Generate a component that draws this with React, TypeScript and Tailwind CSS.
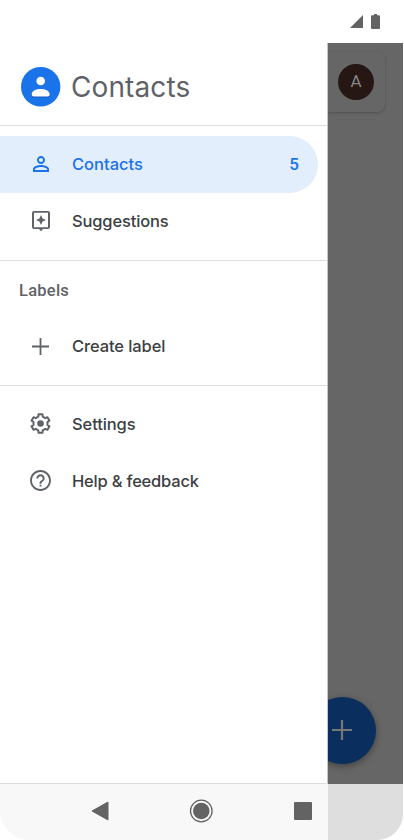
import type { ReactNode } from "react";

interface MenuItemProps {
  icon: ReactNode;
  label: string;
  labelClass?: string;
  count?: number;
  active?: boolean;
}

const PersonIcon = () => (
  <svg className="w-[24px] h-[24px] mt-[-1px]" viewBox="0 0 24 24" fill="currentColor">
    <path d="M12 5.900a2.100 2.100 0 1 1 0 4.200 2.100 2.100 0 0 1 0-4.200m0 9c2.970 0 6.100 1.460 6.100 2.100v1.100H5.900V17c0-.640 3.130-2.100 6.100-2.100M12 4C9.790 4 8 5.790 8 8s1.790 4 4 4 4-1.790 4-4-1.790-4-4-4m0 9c-2.670 0-8 1.340-8 4v3h16v-3c0-2.660-5.330-4-8-4" />
  </svg>
);

const SuggestionsIcon = () => (
  <svg className="w-[24px] h-[24px] mt-[-1px]" viewBox="0 0 24 24" fill="currentColor">
    <path d="M19 2H5a2 2 0 0 0-2 2v14a2 2 0 0 0 2 2h5l2 2.300 2-2.300h5a2 2 0 0 0 2-2V4a2 2 0 0 0-2-2m0 16.200H5V3.800h14z" />
    <path d="M12 16l1.600-3.400L17 11l-3.400-1.600L12 6l-1.600 3.400L7 11l3.400 1.600z" />
  </svg>
);

const PlusIcon = () => (
  <svg className="w-[17px] h-[17px]" viewBox="0 0 17 17" fill="none" stroke="currentColor" strokeWidth="1.800">
    <path d="M8.500 0v17M0 8.500h17" />
  </svg>
);

const GearIcon = () => (
  <svg className="w-[23px] h-[23px] mt-[-2px]" viewBox="-11.500 -11.500 23 23" fill="none" stroke="currentColor" strokeWidth="2" strokeLinejoin="round">
    <path d="M-2.200-6.800L-2-9.200H2L2.200-6.800L4.790-5.310L6.970-6.330L8.970-2.870L6.990-1.490V1.490L8.970 2.870L6.970 6.330L4.790 5.310L2.200 6.800L2 9.200H-2L-2.200 6.800L-4.790 5.310L-6.970 6.330L-8.970 2.870L-6.990 1.490V-1.490L-8.970-2.870L-6.970-6.330L-4.790-5.310z" />
    <circle r="3.300" fill="currentColor" stroke="none" />
  </svg>
);

const HelpIcon = () => (
  <svg className="w-[25px] h-[25px] mt-[-2px]" viewBox="0 0 24 24" fill="currentColor">
    <path d="M11.100 17.800h1.800V16h-1.800zM12 2C6.480 2 2 6.480 2 12s4.480 10 10 10 10-4.480 10-10S17.520 2 12 2m0 18.200c-4.520 0-8.200-3.680-8.200-8.200S7.480 3.800 12 3.800s8.200 3.680 8.200 8.200-3.680 8.200-8.200 8.200M12 6c-2.210 0-4 1.790-4 4h1.900c0-1.150.950-2.100 2.100-2.100s2.100.950 2.100 2.100c0 2-3.050 1.750-3.050 5h1.900c0-2.250 3.050-2.500 3.050-5 0-2.210-1.790-4-4-4" />
  </svg>
);

const MenuItem = ({ icon, label, labelClass = "", count, active = false }: MenuItemProps) => (
  <li
    className={`flex items-center h-[57.200px] mr-[9px] pr-[19px] rounded-r-full ${
      active ? "bg-[#e2eefb] text-[#1a73e8]" : "text-[#5f6368]"
    }`}
  >
    <span className="flex justify-center w-[81px] mr-[-9px]">{icon}</span>
    <span className={`flex-1 pb-[1px] text-[16.500px] font-[480] ${active ? "" : "text-[#3c4043]"} ${labelClass}`}>{label}</span>
    {count !== undefined && <span className="pt-[1px] font-[Roboto] text-[17px] font-medium">{count}</span>}
  </li>
);

const StatusBar = () => (
  <header className="flex justify-end h-[43px] pt-[14px] pr-[24px] gap-[8px] text-[#636363]">
    <svg className="w-[13px] h-[14px]" viewBox="0 0 13 14" fill="currentColor">
      <path d="M13 1v13H0z" />
    </svg>
    <svg className="w-[9px] h-[15px]" viewBox="0 0 9 15" fill="currentColor">
      <path d="M3 0h3v1.300h2a1 1 0 0 1 1 1V14a1 1 0 0 1-1 1H1a1 1 0 0 1-1-1V2.300a1 1 0 0 1 1-1h2z" />
    </svg>
  </header>
);

const Drawer = () => (
  <aside className="w-[328px] shrink-0 bg-white border-r border-[#c4c4c4]">
    <div className="flex items-center h-[83px] pl-[21px] pt-[5px] border-b border-[#dedede]">
      <svg className="w-[40px] h-[40px] mr-[10px]" viewBox="0 0 40 40">
        <circle cx="19.700" cy="19.700" r="19.700" fill="#1a73e8" />
        <path d="M10.700 28.500c0-4 4.500-5.700 9-5.700s9 1.700 9 5.700a1.900 1.900 0 0 1-1.900 1.900H12.600a1.900 1.900 0 0 1-1.900-1.900" fill="#125bbd" />
        <path d="M10.700 27.600c0-4 4.500-5.700 9-5.700s9 1.700 9 5.700a1.900 1.900 0 0 1-1.900 1.900H12.600a1.900 1.900 0 0 1-1.900-1.900" fill="#fff" />
        <circle cx="19.700" cy="14" r="4.300" fill="#fff" />
      </svg>
      <h1 className="text-[28px] leading-none font-[370] tracking-[0.100px] text-[#5f6368]">Contacts</h1>
    </div>
    <ul className="pt-[10px] h-[135px] border-b border-[#dedede]">
      <MenuItem icon={<PersonIcon />} label="Contacts" count={5} active />
      <MenuItem icon={<SuggestionsIcon />} label="Suggestions" labelClass="tracking-[-0.150px]" />
    </ul>
    <section className="h-[125px] border-b border-[#dedede]">
      <h2 className="h-[57px] pl-[19px] font-[Roboto] text-[16.500px] leading-[59px] font-medium tracking-[0.250px] text-[#5f6368]">Labels</h2>
      <ul>
        <MenuItem icon={<PlusIcon />} label="Create label" labelClass="tracking-[-0.100px]" />
      </ul>
    </section>
    <ul className="pt-[10px]">
      <MenuItem icon={<GearIcon />} label="Settings" labelClass="tracking-[-0.100px]" />
      <MenuItem icon={<HelpIcon />} label="Help & feedback" labelClass="tracking-[-0.200px]" />
    </ul>
  </aside>
);

const DimmedPage = () => (
  <main className="flex flex-col justify-between flex-1 mr-[1px] pt-[9px] pb-[20px] bg-[#666] overflow-hidden">
    <div className="flex items-center w-[57px] h-[60px] pl-[10px] rounded-r-[8px] bg-[#666] shadow-[0_1px_3px_#505050]">
      <div className="flex items-center justify-center w-[36px] h-[36px] rounded-full bg-[#261714] font-[Roboto] text-[17px] text-[#858585]">
        A
      </div>
    </div>
    <button className="flex items-center justify-center shrink-0 w-[67px] h-[67px] ml-[-19.500px] mb-[-0.500px] rounded-full bg-[#0a2e5d] text-[#777] shadow-[0_2px_7px_#404040]">
      <svg className="w-[20px] h-[20px]" viewBox="0 0 20 20" stroke="currentColor" strokeWidth="2.200">
        <path d="M10 0v20M0 10h20" />
      </svg>
    </button>
  </main>
);

const NavBar = () => (
  <footer className="flex h-[57px] text-[#636363]">
    <div className="flex items-center w-[328px] pl-[91px] pb-[2px] bg-[#f8f8f8] border-t border-[#dcdcdc] rounded-bl-[30px]">
      <svg className="w-[18px] h-[20px]" viewBox="0 0 18 20" fill="currentColor" stroke="currentColor" strokeLinejoin="round">
        <path d="M17 1v18L1 10z" />
      </svg>
      <svg className="w-[24px] h-[24px] ml-[80px]" viewBox="0 0 24 24">
        <circle cx="12.300" cy="12" r="10.800" fill="none" stroke="currentColor" strokeWidth="1.300" />
        <circle cx="12.300" cy="12" r="8.300" fill="currentColor" />
      </svg>
      <span className="w-[18px] h-[18px] ml-[81px] rounded-[1px] bg-[#636363]" />
    </div>
    <div className="flex flex-col flex-1 mr-[1px]">
      <div className="h-[1px] bg-[#666]" />
      <div className="flex-1 bg-[#dedede] rounded-br-[26px]" />
    </div>
  </footer>
);

export default function App() {
  return (
    <div className="flex flex-col w-[404px] h-[840px] bg-white overflow-hidden font-[Inter,sans-serif]">
      <StatusBar />
      <div className="flex flex-1 min-h-0">
        <Drawer />
        <DimmedPage />
      </div>
      <NavBar />
    </div>
  );
}
